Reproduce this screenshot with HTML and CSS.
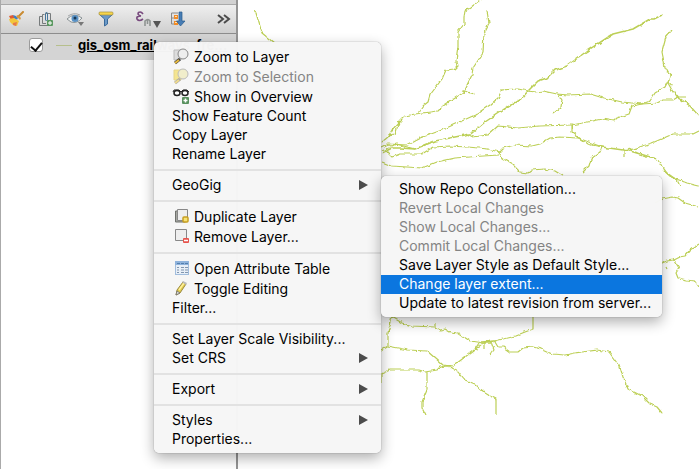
FILE: index.html
```html
<!DOCTYPE html>
<html lang="en">
<head>
<meta charset="utf-8">
<title>Layers</title>
<link rel="stylesheet" href="styles.css">
</head>
<body>
<div class="app">
  <aside class="panel">
    <div class="strip"></div>
    <div class="toolbar" role="toolbar" aria-label="Layer tools">
      <button class="tool" aria-label="Layer styling"><svg width="16" height="16" viewBox="0 0 16 16"><path d="M15 1L10 6" stroke="#c98b32" stroke-width="2" stroke-linecap="round"/><path d="M1 5l4-1 2 3-4 2z" fill="#df5a32"/><path d="M5 4l3 1 2 3-3 1z" fill="#3f7fc1"/><path d="M1 8l5-1 5 3-2 5-4-1-3-3z" fill="#f3c63a"/><path d="M5 12l4-1-1 4-3-1z" fill="#e67a4a"/><path d="M8 5l4 4 1-2-3-3z" fill="#d79a43"/></svg></button>
      <button class="tool" aria-label="Add group"><svg width="16" height="16" viewBox="0 0 16 16" fill="none"><path d="M4.500 5.500H1.500V14.500H10M6.500 3.500H4.500V12.500H8M7.500 2.500H12.500V9" stroke="#777b7c"/><path d="M7.500 9V2.500q1-3 2 0V9q-1 2-2 0" stroke="#45769b"/><rect x="9" y="9" width="6" height="6" rx="1" fill="#5a9860"/><path d="M12 10v4M10 12h4" stroke="#fff"/></svg></button>
      <button class="tool" aria-label="Manage visibility"><svg width="20" height="16" viewBox="0 0 20 16"><path d="M1 8Q8 1 16 7Q11 13 5 11Z" fill="#eef0f0" stroke="#8a9295"/><path d="M2 5Q8 1 14 4" fill="none" stroke="#a2a6a8"/><circle cx="9" cy="7.500" r="3.500" fill="#5991c5"/><circle cx="9" cy="7" r="1.500" fill="#183957"/><path d="M12 11h6l-3 4z" fill="#777"/></svg></button>
      <button class="tool" aria-label="Filter legend"><svg width="16" height="16" viewBox="0 0 16 16"><path d="M1 3L6.500 8V15L9.500 13V8L15 3Z" fill="#6b99c7" stroke="#3a6a9a"/><rect x="1" y="1" width="14" height="3" rx="1" fill="#f6d54b" stroke="#a59143" stroke-width=".7"/></svg></button>
      <button class="tool tool-group" aria-label="Filter by expression"><svg width="26" height="18" viewBox="0 0 26 18"><path d="M8 4Q6 1 3.500 2.500Q2 5 6 6Q1 6 2 9Q4 12 8 9" fill="none" stroke="#784a7e" stroke-width="1.600"/><path d="M10 16v-5q3-3 5 0v5M12.500 10v4" fill="none" stroke="#8f9492" stroke-width="1.600"/><path d="M18 11h8l-4 7z" fill="#555"/></svg></button>
      <button class="tool" aria-label="Expand all"><svg width="16" height="16" viewBox="0 0 16 16"><path d="M8 2H1.500V13H5M2 7h5" fill="none" stroke="#888"/><rect x="4" y="4" width="4" height="4" fill="#f28b25"/><rect x="4" y="10" width="4" height="4" fill="#f28b25"/><path d="M5 5.500h2M5 11.500h2" stroke="#ffe0ae"/><path d="M9 1h3v9h3l-4.500 5L6.500 10H9z" fill="#487db4" stroke="#285b8c" stroke-width=".7"/></svg></button>
      <button class="tool more" aria-label="More tools"><svg width="14" height="12" viewBox="0 0 14 12" fill="none" stroke="#4b4b4b" stroke-width="2"><path d="M1 2l5 4-5 4M7 2l5 4-5 4"/></svg></button>
    </div>
    <div class="layer">
      <input id="rail" class="check" type="checkbox" checked>
      <span class="symbol"></span>
      <label for="rail">gis_osm_railways_fre...</label>
    </div>
  </aside>
  <main class="map">
    <svg class="lines" viewBox="238 0 461 469" preserveAspectRatio="xMinYMin slice" role="img" aria-label="Railway network">
      <defs><filter id="rough" filterUnits="userSpaceOnUse" x="238" y="0" width="461" height="469" color-interpolation-filters="sRGB"><feTurbulence type="fractalNoise" baseFrequency=".18" numOctaves="2" seed="4" result="noise"/><feDisplacementMap in="SourceGraphic" in2="noise" scale="4" xChannelSelector="R" yChannelSelector="G"/></filter></defs>
      <g filter="url(#rough)">
        <path d="M254 10L256 13L262 33L274 43"/>
        <path d="M480 0L475 4L470 8L465 11L464 17V24L458 32V47L456 61L457 66L454 69L446 70L442 79L430 95L428 102L423 106L418 113"/>
        <path d="M487 11L489 23L484 33L483 53L473 68L472 75L464 91L463 93L443 106L438 111L415 114L405 116L400 121L392 130L388 137L382 142M461 90L468 92L474 94M463 89V94M400 121L397 128L395 135L388 136"/>
        <path d="M500 90L518 89L528 91L535 92L543 91L557 94L568 95L590 94L600 97L622 102L642 104L657 103L663 100L673 100L678 97L690 106L699 116M676 97H685M677 95L680 99"/>
        <path d="M502 90L498 98L490 105L475 115L442 130L420 138L407 145L388 144L382 147"/>
        <path class="main" d="M662 15L654 19L650 19L633 29L613 34L587 51L567 66L555 70L547 78L538 81L528 91L522 98L503 110L485 122L472 133L465 135L435 141L415 149L400 148L392 148L382 153"/>
        <path d="M382 151L396 144L415 149M467 134L473 137L488 135L498 126L518 128L540 126L572 125L603 119L614 121L617 118L629 114L632 106L642 104"/>
        <path d="M387 152L392 157L400 154L422 154L433 147L450 146L468 147L488 149L499 152L503 148L515 145L532 146L540 144L550 138L560 137L578 138L602 147"/>
        <path class="main" d="M602 147L630 151L657 159"/><path d="M657 159L667 173L677 180L680 186"/>
        <path d="M382 162L392 166L422 168L437 162L455 158L498 155L499 152L502 158L512 164L520 172L528 173L532 170L545 169L555 171L563 176"/>
        <path d="M671 31L666 37L662 52L665 67L670 76L668 83L673 92L678 97M671 75L665 87L655 93L650 101L642 104M669 82L672 86"/>
        <path d="M558 94L562 100L561 107L553 114M570 124H573V128M572 125V132L587 144L602 147L600 152L591 159L589 166L583 172M622 150L625 152V157M628 151Q628 147 631 149L630 150L652 143L673 134L693 134L699 131"/>
        <path d="M663 170L671 177L687 183L699 186M655 203L662 199L673 197L678 198L685 203L699 207M655 264L662 263L667 261L673 260L679 257L685 256L690 250L699 244M674 260L679 268L676 273L678 278L687 280L695 281L699 287M666 267L667 269"/>
        <path d="M392 317L402 323L412 326L435 327V324M435 327L440 330L445 329L450 332L458 333L470 341L483 343L495 341L515 336L525 332L533 329V317M392 317L388 333L388 346L381 350M388 346L408 350L427 351L443 365L453 366L473 351L483 343"/>
        <path class="main" d="M480 342L496 341M444 366H450M483 343H490"/>
        <path d="M381 374L390 370L418 370L425 372L437 370L440 367L445 366M427 372V390L422 402V408L425 414M450 367L454 370L458 371L465 380L475 384L485 393L490 396L496 399L496 415M381 373V383"/>
        <path d="M495 342L498 347L503 347L510 352L518 352L523 348L533 347L541 349L552 354L565 355L575 353L597 350L609 352L620 367L623 377L628 389L642 396L650 404L657 407L662 413M491 342L494 350L490 355M485 342V348M479 343L475 349L478 350"/>
      </g>
    </svg>
  </main>
</div>

<nav class="menu context" aria-label="Layer menu">
  <button class="item tall"><svg class="icon" viewBox="0 0 18 18"><path d="M2 3h7v10H2z" fill="#ddd" stroke="#bbb"/><path d="M8 12L3 16" stroke="#444" stroke-width="3"/><path d="M7 13L3 16" stroke="#e7b93c" stroke-width="2"/><circle cx="11" cy="7" r="5" fill="#eee" stroke="#888"/></svg>Zoom to Layer</button>
  <button class="item tall" disabled><svg class="icon" viewBox="0 0 18 18"><path d="M2 3h7v10H2z" fill="#f4e590" stroke="#e5d68a"/><path d="M8 12L3 16" stroke="#aaa" stroke-width="3"/><path d="M7 13L3 16" stroke="#efda8c" stroke-width="2"/><circle cx="11" cy="7" r="5" fill="#f1eecb" stroke="#bbb"/></svg>Zoom to Selection</button>
  <button class="item tall"><svg class="icon" viewBox="0 0 18 18"><path d="M1 5L2 3h5l2 2 2-2h4l2 2" fill="none" stroke="#222"/><ellipse cx="5" cy="6" rx="3" ry="2.500" fill="#fff" stroke="#222" stroke-width="1.500"/><ellipse cx="13" cy="6" rx="3" ry="2.500" fill="#fff" stroke="#222" stroke-width="1.500"/><rect x="10" y="10" width="7" height="7" rx="1" fill="#58915e"/><path d="M13.500 11.500v4M11.500 13.500h4" stroke="#fff" stroke-width="1.500"/></svg>Show in Overview</button>
  <button class="item">Show Feature Count</button>
  <button class="item">Copy Layer</button>
  <button class="item">Rename Layer</button>
  <hr>
  <button class="item" aria-haspopup="menu">GeoGig<span class="arrow"></span></button>
  <hr>
  <button class="item tall"><svg class="icon" viewBox="0 0 18 18"><path d="M5 4H3.500v11h10v-2" fill="#a6a8a2" stroke="#6f716d"/><path d="M5.500 2.500h10v11h-10z" fill="#eee" stroke="#888"/><rect x="11" y="10" width="5" height="5" rx="1" fill="#f5e274" stroke="#c79e21" stroke-width="1.500"/></svg>Duplicate Layer</button>
  <button class="item tall"><svg class="icon" viewBox="0 0 18 18"><path d="M3.500 2.500h11v11h-11z" fill="#eee" stroke="#888"/><rect x="11" y="11" width="6" height="5" rx="1" fill="#e7534c"/><path d="M12 13.500h4" stroke="#fff" stroke-width="1.500"/></svg>Remove Layer...</button>
  <hr>
  <button class="item tall"><svg class="icon" viewBox="0 0 18 18"><rect x="3.500" y="2.500" width="13" height="13" fill="#e8eff7" stroke="#a1bddd"/><path d="M3 2h14v4H3z" fill="#8fb3dc"/><path d="M5 4.500h3M9 4.500h3M13 4.500h3" stroke="#537fae"/><path d="M5 8.500h2M9 8.500h3M13 8.500h3M5 11h2M9 11h3M13 11h3M5 13.500h2M9 13.500h3M13 13.500h3" stroke="#8196af"/></svg>Open Attribute Table</button>
  <button class="item tall"><svg class="icon" viewBox="0 0 18 18"><path d="M4 16l1-5 6-8 3 2-6 9z" fill="#e1ca4d" stroke="#9a8a41"/><path d="M7 11l5-7" stroke="#fff19b" stroke-width="1.500"/><path d="M11 2l4 2-1 2-4-3z" fill="#bbb"/><path d="M4 16l1-4 3 2z" fill="#ddd" stroke="#666" stroke-width=".7"/></svg>Toggle Editing</button>
  <button class="item">Filter...</button>
  <hr>
  <button class="item">Set Layer Scale Visibility...</button>
  <button class="item" aria-haspopup="menu">Set CRS<span class="arrow"></span></button>
  <hr>
  <button class="item" aria-haspopup="menu">Export<span class="arrow"></span></button>
  <hr>
  <button class="item" aria-haspopup="menu">Styles<span class="arrow"></span></button>
  <button class="item">Properties...</button>
</nav>

<nav class="menu submenu" aria-label="GeoGig">
  <button class="item">Show Repo Constellation...</button>
  <button class="item" disabled>Revert Local Changes</button>
  <button class="item" disabled>Show Local Changes...</button>
  <button class="item" disabled>Commit Local Changes...</button>
  <button class="item">Save Layer Style as Default Style...</button>
  <button class="item active">Change layer extent...</button>
  <button class="item">Update to latest revision from server...</button>
</nav>
</body>
</html>
```

FILE: styles.css
```css
* { box-sizing: border-box; }
body {
  margin: 0;
  font: 14px/19px Inter, "Liberation Sans", sans-serif;
  color: #000;
  background: #fff;
  overflow: hidden;
}
button { font: inherit; color: inherit; border: 0; background: none; padding: 0; }
.app { display: grid; grid-template-columns: 238px 1fr; height: 100vh; }
.panel { border-left: 1px solid #aaa; border-right: 2px solid #949494; background: #fff; }
.strip { height: 5px; background: #d2d2d2; border-bottom: 1px solid #aaa; }
.toolbar {
  display: flex;
  height: 29px;
  background: linear-gradient(#efefef, #cfcfcf);
  border-bottom: 1px solid #8d8d8d;
}
.tool { display: flex; align-items: center; justify-content: center; width: 30px; }
.tool-group { margin-left: 12px; }
.more { width: 24px; margin-left: auto; }
.layer {
  display: flex;
  align-items: center;
  height: 26px;
  padding-left: 28px;
  padding-bottom: 4px;
  background: #d4d4d4;
  font-size: 13px;
  font-weight: 700;
  text-decoration: underline;
  white-space: nowrap;
  overflow: hidden;
}
.check {
  appearance: none;
  width: 14px;
  height: 14px;
  margin: 0;
  border: 1px solid #9b9b9b;
  border-radius: 3px;
  background: #fff;
  display: grid;
  place-items: center;
  flex: none;
}
.check:checked::before {
  content: "";
  width: 5px;
  height: 9px;
  border: solid #111;
  border-width: 0 2px 2px 0;
  transform: rotate(40deg);
}
.symbol { flex: none; width: 16px; height: 1px; margin: 0 6px 0 13px; background: #b6bf8c; }
.map { overflow: hidden; background: #fff; }
.lines { display: block; width: 100%; height: 100%; fill: none; stroke: #bccf55; stroke-width: 1.2; stroke-linejoin: round; }
.main { stroke-width: 1.5; }
.menu {
  position: absolute;
  padding: 5px 0 4px;
  background: rgba(246, 246, 246, .98);
  border-radius: 5px;
  box-shadow: 0 0 1px rgba(0, 0, 0, .6), 0 5px 14px rgba(0, 0, 0, .32);
}
.context { left: 154px; top: 42px; width: 227px; }
.submenu { left: 381px; top: 176px; width: 281px; padding-top: 4px; }
.item {
  display: flex;
  align-items: center;
  width: 100%;
  height: 19px;
  padding: 0 13px 2px 18px;
  text-align: left;
  white-space: nowrap;
}
.tall { height: 20px; }
.item:disabled { color: #848484; }
.active { color: #fff; background: #0b76df; }
.icon { width: 18px; height: 18px; margin-right: 4px; flex: none; }
.arrow {
  margin-left: auto;
  border-left: 9px solid #4c4c4c;
  border-top: 5px solid transparent;
  border-bottom: 5px solid transparent;
}
hr { height: 2px; margin: 5px 0; border: 0; background: #e2e2e2; }
```
